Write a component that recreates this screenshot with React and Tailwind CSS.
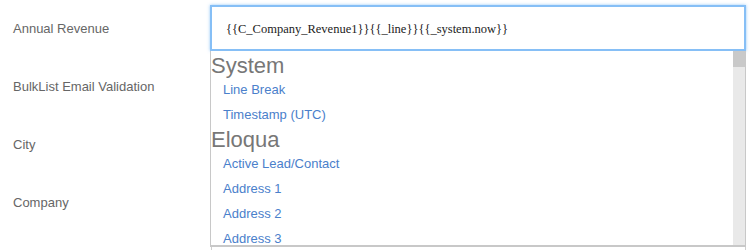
import React from 'react';

const fields = ['Annual Revenue', 'BulkList Email Validation', 'City', 'Company', ''];

const groups = [
  { title: 'System', items: ['Line Break', 'Timestamp (UTC)'] },
  { title: 'Eloqua', items: ['Active Lead/Contact', 'Address 1', 'Address 2', 'Address 3'] },
];

function Dropdown() {
  return (
    <div className="absolute left-[210px] top-[51px] w-[536px] h-[196px] bg-white border-l border-b-2 border-r border-[#c8c8c8] overflow-hidden z-10 flex">
      <div className="flex-1 pt-[2px] font-['Liberation_Sans',Arial,sans-serif]">
        {groups.map((g) => (
          <div key={g.title}>
            <div className="pt-[1px] text-[22px] leading-[23px] text-[#777]">{g.title}</div>
            {g.items.map((it) => (
              <div key={it} className="pl-[12px] text-[13px] leading-[25px] text-[#4a80cb]">
                {it}
              </div>
            ))}
          </div>
        ))}
      </div>
      <div className="w-[12px] h-full bg-[#e9e9e9]">
        <div className="h-[16px] bg-[#c9c9c9]" />
      </div>
    </div>
  );
}

export default function App() {
  return (
    <div className="relative w-[751px] h-[250px] bg-white overflow-hidden">
      {fields.map((f, i) => (
        <div key={i} className="grid grid-cols-[210px_1fr] h-[58px]">
          <div className="pl-[13px] pt-[19px] text-[13px] leading-[20px] text-[#666] font-['Liberation_Sans',Arial,sans-serif]">
            {f}
          </div>
          <div className="pt-[5px] pr-[5px]">
            {i === 0 ? (
              <div className="h-[46px] border-2 border-[#86bff6] shadow-[0_0_3px_rgba(102,175,245,0.7)] bg-white flex items-center pl-[14px] pt-[2px] text-[12.5px] text-[#222] font-['Liberation_Serif','Times_New_Roman',serif]">
                {'{{C_Company_Revenue1}}{{_line}}{{_system.now}}'}
              </div>
            ) : (
              <div className="h-[46px] ml-[1px] border border-[#cfcfcf] bg-white" />
            )}
          </div>
        </div>
      ))}
      <Dropdown />
    </div>
  );
}
